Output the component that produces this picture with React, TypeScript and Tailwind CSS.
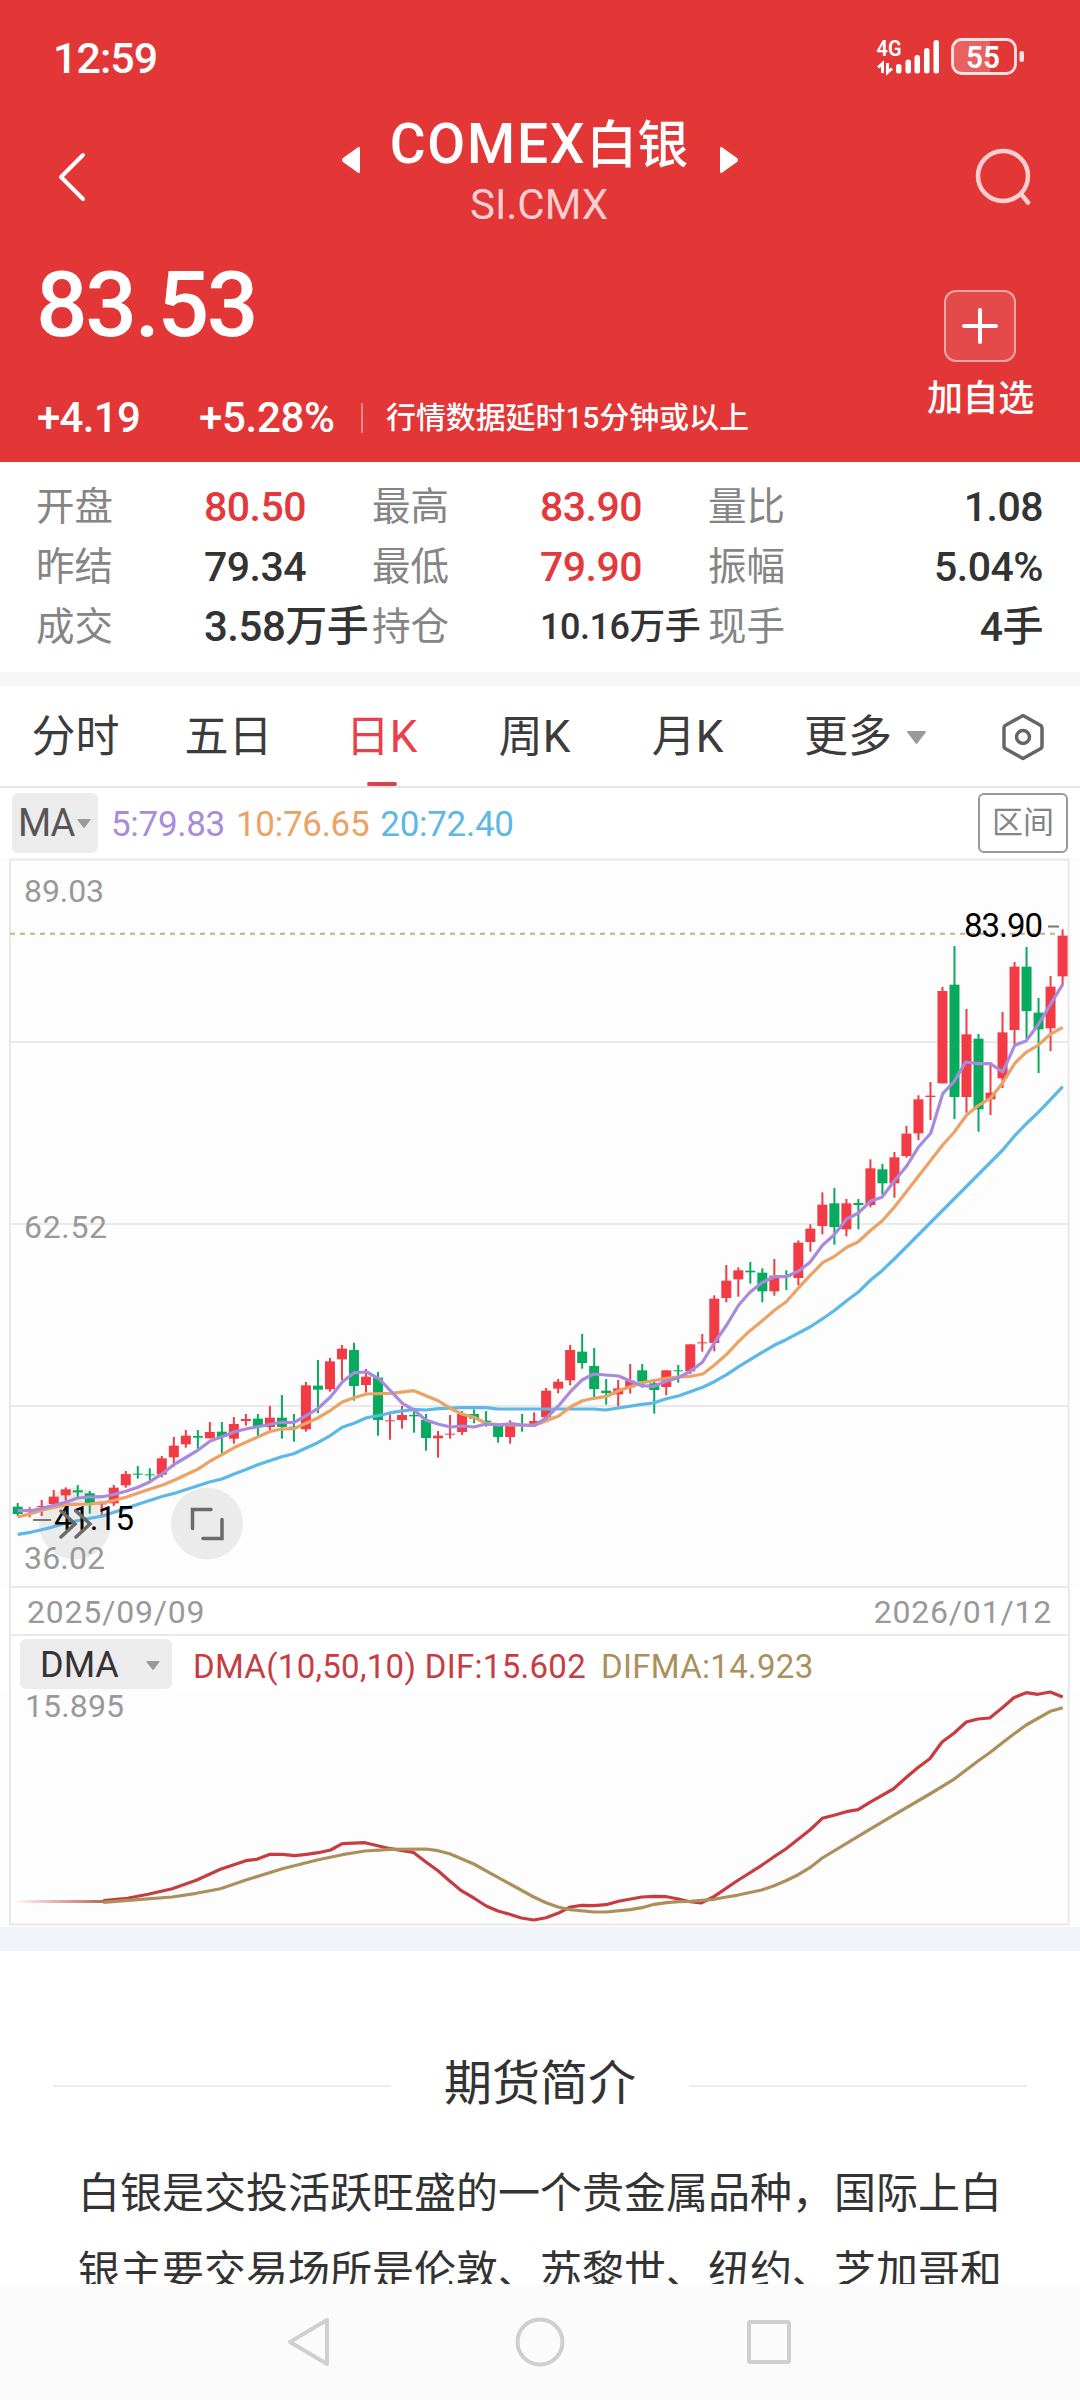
import type { ReactNode } from "react";

type Block = [number, number, string];
type Candle = [number, number, number, number];

const UP = "#f23b45";
const DOWN = "#06ab5e";
const STEP = 12.01;
const FIRST_X = 17.7;

// Series are stored in blocks: x origin, y origin, then points in thirds of a pixel.
const ma5: Block[] = [
  [0, 1300, "53,632 92,632 128,625 200,606 233,594 270,591 308,590 344,583 380,573 414,562 450,545 488,520 524,492 560,471 593,451 631,423 666,410 704,395 740,386 773,380 812,373 845,367 881,368 920,346 953,326 992,290 1027,246 1062,218"],
  [340, 1300, "80,216 118,237 188,311 222,330 257,360 296,373 332,381 368,378 402,381 438,372 474,375 512,371 546,375 584,376 620,353 656,317 692,274 726,240 761,222 797,225 836,228 872,244 905,257 941,259 979,244 1015,233 1052,213 1087,187"],
  [660, 1100, "163,729 200,675 236,615 270,577 305,548 344,530 378,530 416,513 450,487 488,435 522,405 560,357 594,340 632,303 666,292 703,243 740,198"],
  [840, 890, "236,770 272,730 308,611 341,576 377,516 413,521 452,521 488,546 524,466 558,453 594,405 632,342 668,283"],
];

const ma10: Block[] = [
  [0, 1300, "53,651 92,641 128,630 200,614 270,612 308,608 344,601 380,591 414,579 488,555 524,540 593,508 631,483 666,464 704,442 773,411 812,394 845,387 881,386 920,369 953,354 992,331 1027,306 1062,293"],
  [340, 1300, "80,282 152,280 222,272 296,303 332,326 368,343 402,352 438,370 474,374 584,376 656,348 692,320 726,303 761,295 797,290 836,272 905,248 979,235 1015,231 1052,229"],
  [660, 1100, "128,822 163,796 200,763 236,724 270,692 305,664 344,630 378,606 416,563 450,527 488,488 522,470 560,442 594,426 632,391 666,363 703,322"],
  [840, 890, "308,765 341,728 380,675 413,648 452,624 488,578 524,520 558,487 594,466 632,432 668,412"],
];

const ma20: Block[] = [
  [0, 1300, "53,703 92,697 150,683 200,668 270,655 308,648 414,613 488,589 524,580 631,545 666,537 704,521 740,508 773,494 845,470 881,461 920,443 953,428 992,406 1027,382"],
  [340, 1300, "42,370 80,353 113,347 152,338 222,328 257,330 296,326 368,323 438,323 474,327 656,327 761,327 797,330 905,313 941,309 979,296 1015,288"],
  [660, 1100, "128,862 163,845 200,824 236,800 305,758 344,735 378,719 450,681 488,656 522,632 560,602 594,577 632,540 666,512 703,477"],
  [840, 890, "488,780 524,737 558,702 594,668 632,628 668,590"],
];

// high, body top, body bottom, low. A negative high marks a falling day.
const candles: [number, Candle[]][] = [
  [1300, [
    [-609, 620, 642, 648], [622, 632, 635, 652], [600, 618, 621, 648], [570, 590, 612, 615],
    [562, 568, 586, 602], [-555, 571, 577, 592], [-573, 580, 612, 641], [606, 610, 613, 645],
    [555, 563, 610, 618], [513, 522, 556, 563], [-498, 521, 524, 536], [-505, 523, 526, 542],
    [468, 475, 524, 532], [411, 437, 472, 500], [390, 407, 433, 443], [-390, 408, 413, 446],
    [366, 396, 415, 415], [-366, 395, 411, 460], [351, 372, 416, 431], [342, 357, 363, 377],
    [-342, 356, 380, 410], [318, 353, 381, 390], [-285, 353, 381, 416], [-342, 380, 383, 425],
    [246, 256, 388, 395], [-180, 257, 269, 340], [174, 184, 268, 275], [135, 146, 178, 240],
    [-128, 150, 258, 302], [207, 230, 255, 278], [-216, 233, 360, 407], [342, 361, 364, 419],
    [318, 345, 360, 386], [-330, 345, 349, 398], [-342, 360, 414, 452], [393, 407, 415, 473],
    [345, 401, 404, 416], [333, 342, 396, 405], [-328, 342, 356, 370], [-333, 362, 366, 380],
    [-372, 375, 411, 428], [361, 378, 411, 431], [-342, 374, 377, 395], [337, 363, 374, 378],
    [264, 272, 352, 352], [237, 245, 266, 280], [135, 150, 241, 256], [-102, 155, 189, 206],
    [-144, 198, 267, 292], [-237, 272, 279, 314], [240, 265, 283, 319], [192, 242, 262, 281],
    [-192, 211, 245, 263], [-237, 250, 270, 341], [211, 211, 261, 286], [-195, 211, 214, 248],
    [133, 133, 214, 222], [102, 127, 130, 155],
  ]],
  [1100, [
    [586, 596, 729, 754], [495, 542, 594, 607], [502, 511, 538, 590], [-486, 512, 517, 551],
    [-505, 518, 574, 607], [477, 527, 574, 587], [-511, 527, 530, 570], [421, 428, 534, 556],
    [373, 386, 426, 455], [277, 314, 378, 403], [-264, 310, 381, 434], [297, 310, 388, 409],
    [-297, 309, 315, 388], [178, 205, 315, 322], [-192, 208, 250, 284], [156, 172, 250, 293],
  ]],
  [890, [
    [708, 731, 798, 803], [616, 628, 730, 750], [576, 617, 621, 690], [291, 303, 580, 580],
    [-168, 284, 621, 687], [357, 433, 621, 668], [-432, 446, 658, 725], [518, 608, 628, 675],
    [366, 427, 565, 594], [216, 230, 420, 462], [-171, 230, 363, 445], [-324, 368, 418, 549],
    [258, 290, 415, 483], [118, 137, 259, 285],
  ]],
];

const difLine =
  "150,722 185,715 215,703 250,686 285,661 320,628 357,602 373,598 392,583 410,583 428,587 445,583 462,578 480,570 497,551 530,548 550,558 567,566 600,577 618,605 636,632 653,663 670,692 688,714 706,738 723,753 740,763 757,774 775,780 793,773 810,760 828,741 845,736 862,737 880,734 898,724 932,711 950,709 968,710 985,717 1002,725 1018,729 1037,709 1070,663 1106,616 1124,590 1141,567 1176,510 1194,475 1211,466 1229,455 1246,449 1263,427 1297,387 1315,354 1332,324 1350,296 1368,246 1385,220 1403,186 1420,177 1437,174 1455,144 1472,113 1490,98 1507,103 1525,96 1543,111";
const difmaLine =
  "150,727 200,719 250,711 285,700 320,686 357,660 410,626 462,599 497,584 530,573 567,568 618,567 636,572 653,581 688,612 723,652 775,711 793,728 810,741 828,749 862,756 880,756 915,749 932,743 950,733 968,728 985,725 1002,724 1037,718 1055,711 1070,706 1106,690 1124,677 1141,662 1159,644 1176,623 1194,594 1246,529 1297,466 1350,402 1385,358 1420,303 1437,278 1455,249 1472,222 1490,195 1525,154 1543,143";

const toPoints = (raw: string, x0: number, y0: number, kx: number, ky: number) =>
  raw
    .split(" ")
    .map((pair) => {
      const [x, y] = pair.split(",").map(Number);
      return `${(x0 + x / kx).toFixed(1)},${(y0 + y / ky).toFixed(1)}`;
    })
    .join(" ");

const joinBlocks = (blocks: Block[]) =>
  blocks.map(([x0, y0, raw]) => toPoints(raw, x0, y0, 3, 3)).join(" ");

const bars = candles
  .flatMap(([origin, rows]) => rows.map((row) => ({ origin, row })))
  .map(({ origin, row: [high, top, bottom, low] }, index) => ({
    x: FIRST_X + index * STEP,
    color: high < 0 ? DOWN : UP,
    high: origin + Math.abs(high) / 3,
    top: origin + top / 3,
    bottom: origin + bottom / 3,
    low: origin + low / 3,
  }));

const stats = [
  { label: "开盘", value: "80.50", className: "text-[41px] text-[#e23a3c]" },
  { label: "最高", value: "83.90", className: "text-[41px] text-[#e23a3c]" },
  { label: "量比", value: "1.08", className: "text-[41px] text-[#333333] text-right" },
  { label: "昨结", value: "79.34", className: "text-[41px] text-[#333333]" },
  { label: "最低", value: "79.90", className: "text-[41px] text-[#e23a3c]" },
  { label: "振幅", value: "5.04%", className: "text-[41px] text-[#333333] text-right" },
  { label: "成交", value: "3.58万手", className: "text-[42px] text-[#333333]" },
  { label: "持仓", value: "10.16万手", className: "text-[36px] text-[#333333]" },
  { label: "现手", value: "4手", className: "text-[41px] text-[#333333] text-right" },
];

function Caret({ className }: { className: string }) {
  return (
    <svg viewBox="0 0 20 13" className={className} fill="currentColor">
      <path d="M1.5 0h17q1.5 0 .8 1.3L11 12.2q-1 1.2-2 0L.7 1.3Q0 0 1.5 0z" />
    </svg>
  );
}

function StatusBar() {
  return (
    <div className="flex h-[116px] items-center justify-between pl-[53px] pr-[54px]">
      <span className="text-[43px] font-medium tracking-[-1px]">12:59</span>
      <svg viewBox="876 36 150 44" className="h-[44px] w-[150px]" fill="white">
        <text x="876.500" y="56" fontSize="22" fontWeight="600" textLength="25" lengthAdjust="spacingAndGlyphs">4G</text>
        <path d="M882.500 73V63.500l-4.500 4M887.500 63v9.500l4.500-4" fill="none" stroke="white" strokeWidth="3" />
        <rect x="896" y="64" width="5.5" height="9.5" rx="2.5" />
        <rect x="905.500" y="59.500" width="5.5" height="14" rx="2.5" />
        <rect x="914.500" y="55" width="5.500" height="18.500" rx="2.500" />
        <rect x="924" y="48" width="5.500" height="25.500" rx="2.500" />
        <rect x="933.500" y="40" width="5.500" height="33.500" rx="2.500" />
        <path d="M962 40h28v33h-28q-9 0-9-9V49q0-9 9-9z" fillOpacity="0.22" />
        <rect x="952.500" y="39.500" width="63" height="34" rx="9" fill="none" stroke="white" strokeOpacity="0.85" strokeWidth="2.8" />
        <rect x="1019.500" y="51" width="4.500" height="11" rx="2" fillOpacity="0.850" />
        <text x="983" y="68" fontSize="32" fontWeight="600" textAnchor="middle" textLength="34" lengthAdjust="spacingAndGlyphs">55</text>
      </svg>
    </div>
  );
}

function Header() {
  return (
    <header className="h-[462px] bg-[#e23637] text-white">
      <StatusBar />
      <div className="flex h-[118px] items-start justify-between pl-[56px] pr-[49px]">
        <svg viewBox="0 0 30 50" className="mt-[36px] h-[50px] w-[30px]" fill="none" stroke="white" strokeWidth="4" strokeLinecap="round" strokeLinejoin="round">
          <path d="M27 3 5 25l22 22" />
        </svg>
        <div className="ml-[19px] flex items-start">
          <svg viewBox="0 0 20 28" className="mt-[30px] mr-[29px] h-[28px] w-[20px]" fill="white">
            <path d="M19 2v24q-1 2-3 0L2 16q-2-2 0-4L16 2q2-2 3 0z" />
          </svg>
          <div className="flex flex-col items-center">
            <h1 className="whitespace-nowrap text-[51px] font-medium leading-[56px]">
              <span className="text-[55px] tracking-[1.8px]">COMEX</span>
              白银
            </h1>
            <span className="mt-[9px] text-[42px] leading-[44px] text-[#fbcfd0]">SI.CMX</span>
          </div>
          <svg viewBox="0 0 20 28" className="mt-[30px] ml-[31px] h-[28px] w-[20px]" fill="white">
            <path d="M1 2v24q1 2 3 0l14-10q2-2 0-4L4 2Q2 0 1 2z" />
          </svg>
        </div>
        <svg viewBox="0 0 56 58" className="mt-[32px] h-[58px] w-[56px]" fill="none" stroke="#fbcfd0" strokeWidth="4.5">
          <circle cx="28" cy="28" r="25" />
          <path d="m46 46 7 8.500" strokeLinecap="round" />
        </svg>
      </div>
      <div className="flex h-[228px] justify-between pl-[37px] pr-[46px]">
        <div className="flex flex-col">
          <div className="-ml-px mt-[23px] text-[91px] font-medium leading-[96px] tracking-[-2.4px]">83.53</div>
          <div className="mt-[43px] flex h-[44px] items-center text-[42px] font-medium leading-[44px]">
            <span className="w-[162px] tracking-[-0.7px]">+4.19</span>
            <span className="w-[162px] tracking-[-0.3px]">+5.28%</span>
            <span className="mr-[23px] h-[30px] w-[2px] bg-white/40" />
            <span className="text-[30px] tracking-[-0.1px]">行情数据延时15分钟或以上</span>
          </div>
        </div>
        <div className="flex flex-col items-center pt-[56px]">
          <div className="flex h-[72px] w-[72px] items-center justify-center rounded-[12px] border-2 border-white/50 bg-white/10">
            <svg viewBox="0 0 38 38" className="h-[38px] w-[38px]" stroke="white" strokeWidth="4" strokeLinecap="round">
              <path d="M19 3v32M3 19h32" />
            </svg>
          </div>
          <span className="mt-[17px] text-[36px] font-medium leading-[40px] tracking-[-0.3px]">加自选</span>
        </div>
      </div>
    </header>
  );
}

function Stats() {
  return (
    <section className="grid h-[210px] grid-cols-[336px_336px_335px] content-start bg-white pl-[36px] pt-[15px]">
      {stats.map((item) => (
        <div key={item.label} className="flex h-[60px] items-center whitespace-nowrap leading-[60px]">
          <span className="w-[168px] shrink-0 text-[38.5px] text-[#858585]">{item.label}</span>
          <span className={`grow font-medium tracking-[-0.5px] ${item.className}`}>{item.value}</span>
        </div>
      ))}
    </section>
  );
}

function Tab({ children, active }: { children: ReactNode; active?: boolean }) {
  return (
    <div className={`relative flex h-full w-[153px] items-center justify-center ${active ? "text-[#e8404c]" : "text-[#3c3c3c]"}`}>
      {children}
      {active && <span className="absolute bottom-0 left-[62px] h-[4px] w-[30px] rounded-sm bg-[#d9434f]" />}
    </div>
  );
}

function Tabs() {
  return (
    <nav className="flex h-[102px] items-center border-b-2 border-[#e6e6e6] text-[44px]">
      <div className="-ml-px flex h-full pt-[2px]">
        <Tab>分时</Tab>
        <Tab>五日</Tab>
        <Tab active>日K</Tab>
        <Tab>周K</Tab>
        <Tab>月K</Tab>
      </div>
      <div className="ml-[40px] flex items-center pt-[2px] text-[#3c3c3c]">
        更多
        <Caret className="ml-[14px] h-[13px] w-[21px] text-[#999999]" />
      </div>
      <svg viewBox="0 0 44 48" className="ml-[74px] mt-px h-[48px] w-[44px]" fill="none" stroke="#666666" strokeWidth="3.5">
        <path d="M22 2.500 39 12q2 1 2 3v18q0 2-2 3L22 45.500 5 36q-2-1-2-3V15q0-2 2-3z" strokeLinejoin="round" />
        <circle cx="22" cy="24" r="6.500" />
      </svg>
    </nav>
  );
}

function PriceChart() {
  return (
    <div className="h-[730px] w-full bg-[#fdfdfd]">
      <svg viewBox="0 858 1080 730" className="block h-[730px] w-full" fill="none">
        <path d="M10 859.500h1060M10 1042h1059M10 1224h1059M10 1406h1059M10 1587h1059M10 859v729M1068.500 859v729" stroke="#e9e9e9" strokeWidth="2" />
        <path d="M10 933.700h1050" stroke="#c5b183" strokeWidth="2" strokeDasharray="5 5" />
        <circle cx="75" cy="1523.500" r="36" fill="#ebebeb" />
        <g fill="#999999" fontSize="32">
          <text x="24" y="901.500" textLength="80">89.03</text>
          <text x="24" y="1237.500" textLength="83">62.52</text>
          <text x="24" y="1568.500" textLength="81">36.02</text>
        </g>
        {bars.map((bar) => (
          <g key={bar.x} fill={bar.color}>
            <rect x={bar.x - 1} y={bar.high} width="2" height={bar.low - bar.high} />
            <rect x={bar.x - 5} y={bar.top} width="10" height={Math.max(bar.bottom - bar.top, 1)} />
          </g>
        ))}
        <g strokeWidth="3.2" strokeLinejoin="round">
          <polyline points={joinBlocks(ma20)} stroke="#5cb8e6" />
          <polyline points={joinBlocks(ma10)} stroke="#eda265" />
          <polyline points={joinBlocks(ma5)} stroke="#a88bdc" />
        </g>
        <path d="M1048 926.500h11M33 1520h18" stroke="#777777" strokeWidth="2" />
        <g fill="#000000" fontSize="33">
          <text x="964" y="937" textLength="79">83.90</text>
          <text x="54" y="1530" textLength="80">41.15</text>
        </g>
        <path d="m61 1511 14 13-14 13M76 1511l14 13-14 13" stroke="#6b6b6b" strokeWidth="3.500" strokeLinecap="round" />
        <circle cx="207" cy="1523.500" r="36" fill="#ebebeb" />
        <path d="M211 1509.500h-18.500v19M203 1538.500h19v-19" stroke="#6b6b6b" strokeWidth="3.500" strokeLinecap="round" />
      </svg>
    </div>
  );
}

function IndicatorChart() {
  return (
    <svg viewBox="0 1689 1080 238" className="block h-[238px] w-full overflow-visible bg-[#fdfdfd]" fill="none">
      <defs>
        <linearGradient id="fade" x1="0" x2="1">
          <stop offset="0" stopColor="#c83c3c" stopOpacity="0" />
          <stop offset="1" stopColor="#a8604a" stopOpacity="0.9" />
        </linearGradient>
      </defs>
      <path d="M10 1689v236M1068.500 1689v236M10 1924.500h1060" stroke="#e9e9e9" strokeWidth="2" />
      <text x="25" y="1717" fill="#999999" fontSize="32" textLength="99">15.895</text>
      <rect x="14" y="1900" width="90" height="3" fill="url(#fade)" />
      <g strokeWidth="3.2" strokeLinejoin="round">
        <polyline points={toPoints(difLine, 0, 1660, 1.452, 3)} stroke="#c73c41" />
        <polyline points={toPoints(difmaLine, 0, 1660, 1.452, 3)} stroke="#ab905b" />
      </g>
    </svg>
  );
}

function Intro() {
  return (
    <section className="h-[333px] overflow-hidden px-[53px] pt-[105px] text-[#333333]">
      <div className="flex h-[60px] items-center justify-between">
        <span className="h-[2px] w-[338px] bg-[#ececec]" />
        <h2 className="-mt-[4px] text-[48px] leading-[60px]">期货简介</h2>
        <span className="h-[2px] w-[338px] bg-[#ececec]" />
      </div>
      <p className="ml-[25px] mt-[39px] whitespace-nowrap text-[42px] leading-[78px]">
        白银是交投活跃旺盛的一个贵金属品种，国际上白
        <br />
        银主要交易场所是伦敦、苏黎世、纽约、芝加哥和
      </p>
    </section>
  );
}

function NavigationBar() {
  return (
    <footer className="flex h-[116px] items-center justify-center bg-[#fbfbfb] pl-[2px]">
      <svg viewBox="286 2316 510 52" className="h-[52px] w-[510px]" fill="none" stroke="#cfcfcf" strokeWidth="4" strokeLinejoin="round">
        <path d="M327 2320v44l-37-22z" />
        <circle cx="540" cy="2342" r="22.500" />
        <rect x="749" y="2322" width="40" height="40" rx="1" />
      </svg>
    </footer>
  );
}

export default function App() {
  return (
    <main className="h-[2400px] w-[1080px] overflow-hidden bg-white font-[Roboto,'Noto_Sans_CJK_SC',sans-serif]">
      <Header />
      <Stats />
      <div className="h-[14px] bg-[#f7f7f7]" />
      <Tabs />
      <div className="flex h-[70px] items-center px-[12px] text-[35px] tracking-[-0.3px]">
        <div className="flex h-[60px] w-[86px] items-center rounded-[6px] bg-[#ececec] pl-[6px] text-[38px] tracking-[-1px] text-[#555555]">
          MA
          <Caret className="ml-[3px] h-[9px] w-[14px] text-[#999999]" />
        </div>
        <span className="ml-[13px] pt-[4px] text-[#a88bdc]">5:79.83</span>
        <span className="ml-[11px] pt-[4px] text-[#eda265]">10:76.65</span>
        <span className="ml-[11px] pt-[4px] text-[#5cb8e6]">20:72.40</span>
        <div className="ml-auto flex h-[60px] w-[90px] items-center justify-center rounded-[6px] border-2 border-[#999999] text-[31px] tracking-normal text-[#858585]">
          区间
        </div>
      </div>
      <PriceChart />
      <div className="ml-[9px] mr-[10px] flex h-[48px] items-center justify-between border-x-2 border-b-2 border-[#e9e9e9] px-[16px] pt-px text-[32px] tracking-[0.8px] text-[#999999]">
        <span>2025/09/09</span>
        <span>2026/01/12</span>
      </div>
      <div className="ml-[9px] mr-[10px] flex h-[53px] items-end border-x-2 border-[#e9e9e9] pl-[9px] text-[33px] tracking-[0.3px]">
        <div className="flex h-[50px] w-[152px] items-center rounded-[6px] bg-[#ececec] pl-[20px] pt-[2px] text-[36px] tracking-normal text-[#333333]">
          DMA
          <Caret className="ml-auto mr-[12px] h-[9px] w-[14px] text-[#999999]" />
        </div>
        <span className="ml-[21px] leading-[45px] text-[#c73c41]">DMA(10,50,10) DIF:15.602</span>
        <span className="ml-[15px] leading-[45px] text-[#ab905b]">DIFMA:14.923</span>
      </div>
      <IndicatorChart />
      <div className="h-[24px] bg-[#f1f4f8]" />
      <Intro />
      <NavigationBar />
    </main>
  );
}
